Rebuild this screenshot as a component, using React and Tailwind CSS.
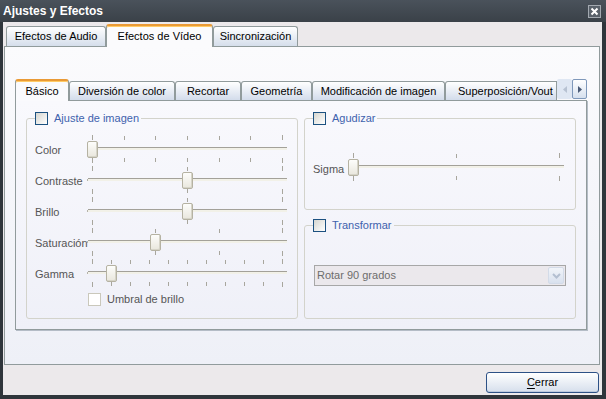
import React from 'react';

const Checkbox = ({ disabled }) => (
  <span
    className={
      disabled
        ? 'block w-[13px] h-[13px] border border-[#cac8bb] bg-white'
        : 'block w-[13px] h-[13px] border border-[#1c5180] bg-linear-to-br from-[#d6d6d0] to-white'
    }
  />
);

const Slider = ({ w, ticks, value }) => {
  const span = w - 10;
  const xs = Array.from({ length: ticks }, (_, i) => 5 + Math.round((i * span) / (ticks - 1)));
  const tx = 5 + Math.round(value * span);
  return (
    <div className="relative h-[31px]">
      <svg width={w} height="31" className="block">
        {xs.map((x, i) => {
          const end = i === 0 || i === xs.length - 1;
          return (
            <g key={i} stroke="#a8a69d" strokeWidth="1">
              <line x1={x + 0.5} x2={x + 0.5} y1={end ? 2 : 3} y2={7} />
              <line x1={x + 0.5} x2={x + 0.5} y1={25} y2={end ? 30 : 29} />
            </g>
          );
        })}
        <rect x="1" y="14" width={w - 1} height="1" fill="#a3a199" />
        <rect x="1" y="15" width={w - 1} height="2" fill="#f2f1e8" />
        <rect x="0" y="15" width="1" height="2" fill="#b5b3aa" />
      </svg>
      <div
        className="absolute top-[8px] w-[11px] h-[17px] rounded-[2px] border border-[#b5b2a2] bg-linear-to-b from-[#fdfdfb] to-[#e9e7dd] shadow-[inset_-1px_-1px_0_#d6d4c8]"
        style={{ left: tx - 5 }}
      />
    </div>
  );
};

const SliderRow = ({ label, ticks, value }) => (
  <div className="flex">
    <div className="w-[52px] pt-[11px] leading-[13px] text-[#555]">{label}</div>
    <Slider w={200} ticks={ticks} value={value} />
  </div>
);

const Group = ({ title, className, children }) => (
  <fieldset className={`border border-[#d3d3cb] rounded-[3px] px-2 ${className}`}>
    <legend className="pr-[2px]">
      <span className="flex items-center gap-[6px]">
        <Checkbox />
        <span className="leading-[13px] text-[#3e62ad]">{title}</span>
      </span>
    </legend>
    {children}
  </fieldset>
);

const Tab = ({ label, active, className = '' }) =>
  active ? (
    <div
      className={`h-[23px] -mb-px relative z-10 flex items-center justify-center border border-b-0 border-[#919b9c] border-t-2 border-t-[#e99a36] rounded-t-[3px] bg-[#fbfbfd] shadow-[inset_0_1px_0_#ffcb66] ${className}`}
    >
      {label}
    </div>
  ) : (
    <div
      className={`h-[20px] flex items-center justify-center border border-b-0 border-[#919b9c] rounded-t-[3px] bg-linear-to-b from-white to-[#d5deeb] ${className}`}
    >
      {label}
    </div>
  );

const InnerTab = ({ label, active, className = '' }) =>
  active ? (
    <div
      className={`h-[22px] -mb-px relative z-10 flex items-center justify-center border border-b-0 border-[#919b9c] border-t-2 border-t-[#e99a36] rounded-t-[3px] bg-[#fafafd] shadow-[inset_0_1px_0_#ffcb66] ${className}`}
    >
      {label}
    </div>
  ) : (
    <div
      className={`h-[19px] flex items-center border border-b-0 border-[#919b9c] rounded-t-[3px] bg-linear-to-b from-white to-[#d3dceb] overflow-hidden whitespace-nowrap ${className}`}
    >
      {label}
    </div>
  );

export default function App() {
  return (
    <div className="w-[606px] h-[399px] flex flex-col bg-[#2f353b] text-[11px] text-black font-['Liberation_Sans',Arial,sans-serif] select-none">
      {/* title bar */}
      <div className="h-[22px] shrink-0 flex items-center justify-between pl-[3px] pr-[5px] bg-linear-to-b from-[#4a525b] to-[#3a4148]">
        <span className="text-white font-bold text-[12px]">Ajustes y Efectos</span>
        <svg width="13" height="13" viewBox="0 0 13 13">
          <rect x="0.5" y="0.5" width="12" height="12" fill="#59616a" stroke="#a3a9b0" />
          <path d="M3.5 3.5 L9.5 9.5 M9.5 3.5 L3.5 9.5" stroke="white" strokeWidth="2" />
        </svg>
      </div>

      <div className="flex-1 flex flex-col ml-[3px] mr-[4px] mb-[4px] pl-px pr-[2px] bg-[#ece9eb]">
        {/* top tabs */}
        <div className="h-[24px] shrink-0 flex items-end pl-[2px]">
          <Tab label="Efectos de Audio" className="w-[100px]" />
          <Tab label="Efectos de Vídeo" active className="w-[107px]" />
          <Tab label="Sincronización" className="w-[85px]" />
        </div>

        {/* main pane */}
        <div className="h-[319px] shrink-0 border border-[#919b9c] bg-linear-to-b from-[#fbfbfd] to-[#eef0f7] pl-[10px] pt-[32px]">
          <div className="w-[572px]">
            <div className="h-[21px] flex items-end">
              <InnerTab label="Básico" active className="w-[54px]" />
              <InnerTab label="Diversión de color" className="w-[106px] justify-center" />
              <InnerTab label="Recortar" className="w-[66px] justify-center" />
              <InnerTab label="Geometría" className="w-[71px] justify-center" />
              <InnerTab label="Modificación de imagen" className="w-[133px] justify-center" />
              <InnerTab label="Superposición/Vout" className="w-[112px] pl-[12px] rounded-tr-none" />
              <div className="h-[20px] mb-px flex">
                <div className="w-[15px] flex items-center justify-center bg-[#dfe7f3] rounded-[2px]">
                  <svg width="4" height="7" viewBox="0 0 4 7">
                    <polygon points="4,0 0,3.5 4,7" fill="#b7c2d2" />
                  </svg>
                </div>
                <div className="w-[15px] flex items-center justify-center border border-[#7f98ba] rounded-[2px] bg-linear-to-b from-white to-[#d6e0ee]">
                  <svg width="4" height="7" viewBox="0 0 4 7">
                    <polygon points="0,0 4,3.5 0,7" fill="#4a5a76" />
                  </svg>
                </div>
              </div>
            </div>

            <div className="h-[230px] border border-[#919b9c] shadow-[1px_1px_0_#b4bcc6] bg-linear-to-b from-[#f9f9fd] to-[#eff0f8] flex gap-[6px] pl-[10px] pt-[11px]">
              <Group title="Ajuste de imagen" className="w-[272px] h-[207px] pt-[8px]">
                <SliderRow label="Color" ticks={7} value={0} />
                <SliderRow label="Contraste" ticks={3} value={0.5} />
                <SliderRow label="Brillo" ticks={3} value={0.5} />
                <SliderRow label="Saturación" ticks={4} value={1 / 3} />
                <SliderRow label="Gamma" ticks={11} value={0.1} />
                <div className="flex items-center gap-[6px] ml-[53px] mt-[5px]">
                  <Checkbox disabled />
                  <span className="leading-[13px] text-[#555]">Umbral de brillo</span>
                </div>
              </Group>

              <div className="flex flex-col gap-[9px]">
                <Group title="Agudizar" className="w-[272px] h-[98px] pt-[26px]">
                  <div className="flex">
                    <div className="w-[35px] pt-[12px] leading-[13px] text-[#555]">Sigma</div>
                    <Slider w={216} ticks={3} value={0} />
                  </div>
                </Group>
                <Group title="Transformar" className="w-[272px] h-[100px] pt-[33px]">
                  <div className="ml-px w-[252px] h-[21px] border border-[#a7a7a7] bg-[#ebe8ec] flex items-center justify-between">
                    <span className="pl-[2px] text-[#6d6d6d]">Rotar 90 grados</span>
                    <span className="w-[16px] h-[17px] mr-px flex items-center justify-center rounded-[2px] border border-[#d3dbe8] bg-linear-to-b from-[#f1f4f9] to-[#d9e1ee]">
                      <svg width="9" height="6" viewBox="0 0 9 6">
                        <path d="M1 1 L4.5 4.5 L8 1" stroke="#b3bfd0" strokeWidth="2" fill="none" />
                      </svg>
                    </span>
                  </div>
                </Group>
              </div>
            </div>
          </div>
        </div>

        {/* bottom bar */}
        <div className="flex-1 flex justify-end items-start pt-[7px]">
          <button className="w-[113px] h-[21px] mr-px rounded-[3px] border border-[#2d5186] bg-linear-to-b from-white to-[#d6dfec] shadow-[inset_0_-1px_0_#bccadd] text-black">
            <span className="underline underline-offset-2">C</span>errar
          </button>
        </div>
      </div>
    </div>
  );
}
